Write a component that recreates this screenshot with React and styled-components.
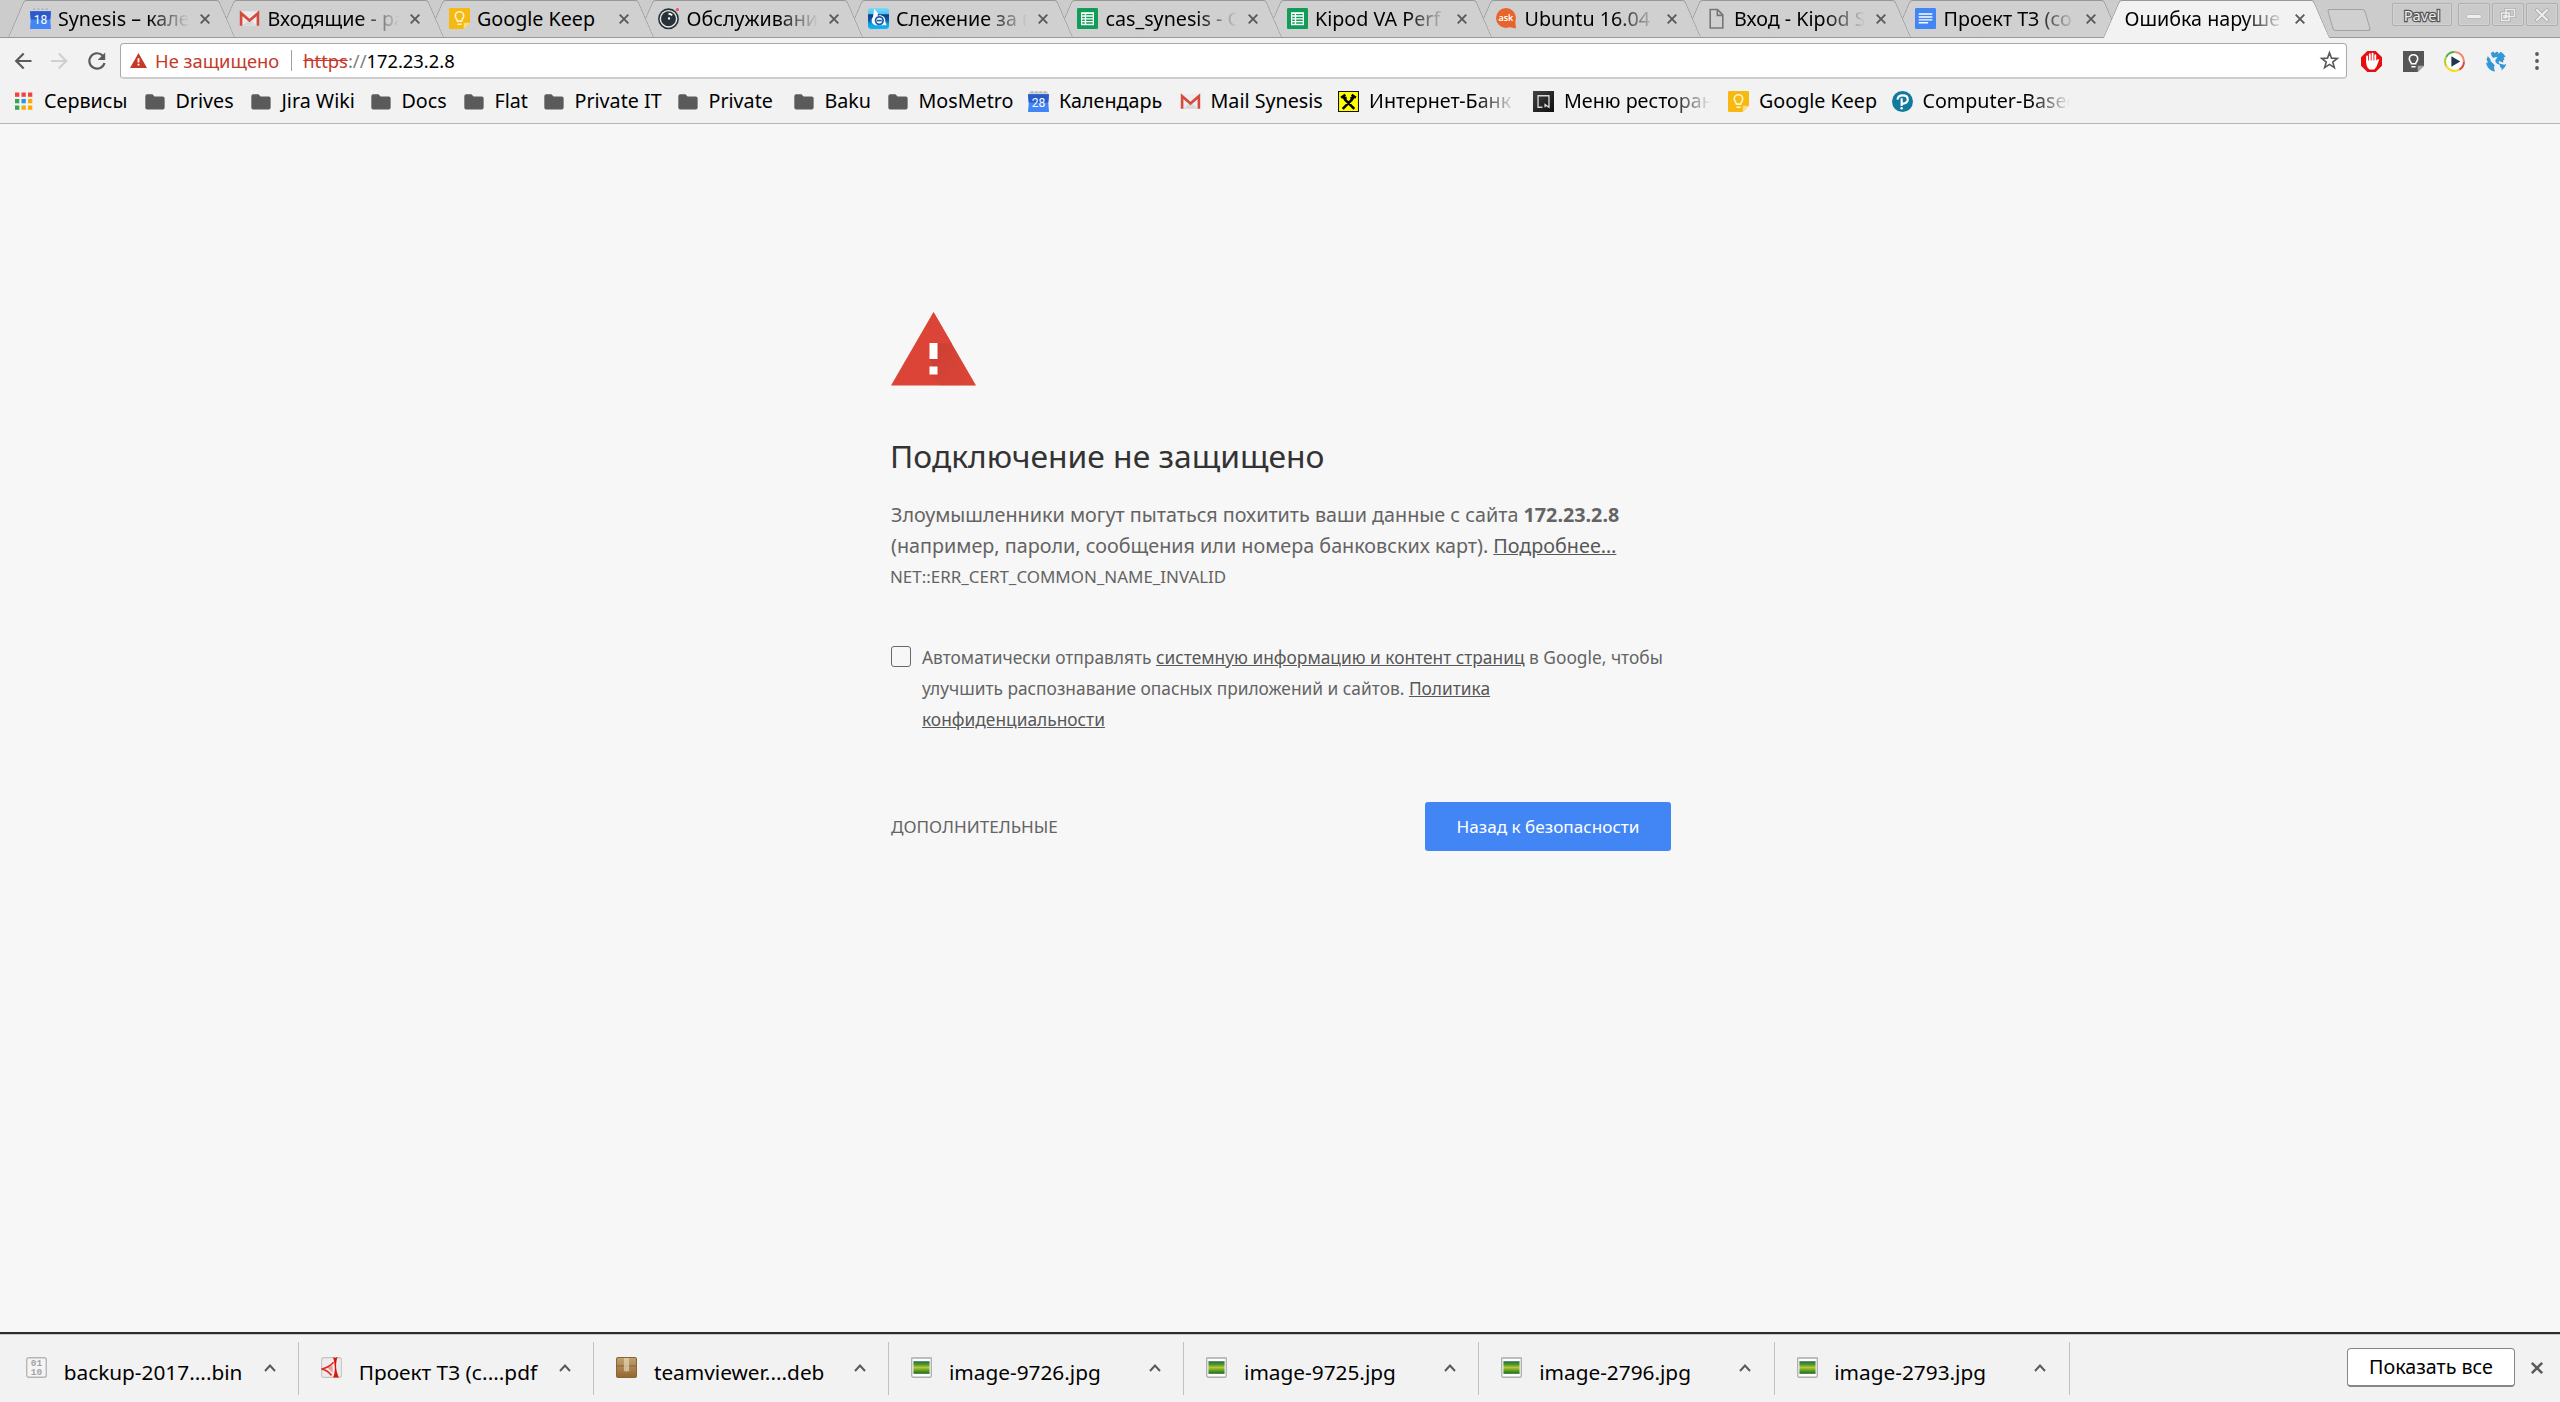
import React from "react";
import styled, { createGlobalStyle, css } from "styled-components";

const GlobalStyle = createGlobalStyle`
  * {
    box-sizing: border-box;
  }
  body {
    margin: 0;
    background: #f7f7f7;
    font-family: "Noto Sans", sans-serif;
    color: #000;
  }
`;

const Window = styled.div`
  width: 2560px;
  height: 1402px;
  display: flex;
  flex-direction: column;
  overflow: hidden;
`;

/* ---------- tab strip ---------- */

const TabStrip = styled.div`
  display: flex;
  height: 38px;
  padding-left: 8px;
  background: #cccccc;
  box-shadow: inset 0 -1px 0 #989898;
`;

const edge = css`
  content: "";
  position: absolute;
  top: 0;
  bottom: 0;
  width: 60%;
  z-index: -1;
  background: ${(props) => (props.$active ? "#f2f2f2" : "#d0d0d0")};
  border-top: 1px solid #979797;
`;

const Tab = styled.div`
  position: relative;
  isolation: isolate;
  z-index: ${(props) => props.$layer};
  display: flex;
  align-items: center;
  flex: none;
  width: 226.5px;
  height: ${(props) => (props.$active ? "38px" : "37px")};
  margin-right: -17px;
  padding-left: 21.5px;
  &::before {
    ${edge}
    left: 0;
    border-left: 1.6px solid #989898;
    border-top-left-radius: 3px;
    transform: skewX(-23.4deg);
    transform-origin: bottom left;
  }
  &::after {
    ${edge}
    right: 0;
    border-right: 1.6px solid #989898;
    border-top-right-radius: 3px;
    transform: skewX(23.4deg);
    transform-origin: bottom right;
  }
`;

const fade = css`
  overflow: hidden;
  white-space: nowrap;
  mask-image: linear-gradient(to right, #000 calc(100% - 40px), transparent);
`;

const TabTitle = styled.span`
  ${(props) => !props.$plain && fade}
  white-space: nowrap;
  flex: none;
  width: ${(props) => (props.$active ? "159px" : "131px")};
  margin-left: ${(props) => (props.$active ? "0" : "7.5px")};
  margin-right: 11.3px;
  font-size: 19.7px;
  line-height: 36px;
`;

const NewTab = styled.div`
  width: 38px;
  height: 22px;
  margin: 9px 0 0 17.5px;
  border: 1.5px solid #a3a3a3;
  border-radius: 3px;
  background: #d0d0d0;
  transform: skewX(16deg);
`;

const WindowButtons = styled.div`
  display: flex;
  gap: 2px;
  margin: 3px 2px 0 auto;
`;

const WindowButton = styled.div`
  display: flex;
  align-items: center;
  justify-content: center;
  width: ${(props) => (props.$wide ? "60px" : "32px")};
  margin-right: ${(props) => (props.$wide ? "4px" : "0")};
  height: 23px;
  border: 1.5px solid #b0b0b0;
  border-radius: 2px;
  background: #cacaca;
  box-shadow: inset 0 0 0 1px #d2d2d2;
  color: #ededed;
  font-size: 14.6px;
  line-height: 20px;
  -webkit-text-stroke: 2.4px #555;
  paint-order: stroke fill;
`;

/* ---------- toolbar ---------- */

const Toolbar = styled.div`
  display: flex;
  align-items: center;
  height: 46px;
  padding: 0 13px;
  background: #f2f2f2;
`;

const NavButton = styled.span`
  display: flex;
  width: 20px;
  margin-right: ${(props) => props.$gap}px;
`;

const Omnibox = styled.div`
  display: flex;
  align-items: center;
  width: 2228px;
  height: 36px;
  padding: 0 7px 0 9px;
  margin-right: 14px;
  background: #fff;
  border: 1px solid #a9a9a9;
  border-bottom: 2px solid #cdcdcd;
  border-radius: 4px;
  font-size: 18.35px;
  line-height: 32px;
`;

const Warning = styled.span`
  display: flex;
  align-items: center;
  gap: 8px;
  height: 21px;
  padding-right: 12px;
  margin-right: 11px;
  border-right: 1px solid #a0a0a0;
  color: #c53929;
`;

const Scheme = styled.span`
  color: #c53929;
  text-decoration: line-through;
`;

const Slashes = styled.span`
  color: #7f7f7f;
`;

const StarSlot = styled.span`
  display: flex;
  margin-left: auto;
`;

const Extensions = styled.div`
  display: flex;
  align-items: center;
  gap: 20.5px;
`;

/* ---------- bookmarks ---------- */

const Bookmarks = styled.div`
  display: flex;
  align-items: center;
  height: 40px;
  padding: 0 0 5px 14px;
  background: #f2f2f2;
  border-bottom: 1.5px solid #b6b6b6;
`;

const Bookmark = styled.div`
  display: flex;
  align-items: center;
  flex: none;
  gap: 10px;
  width: ${(props) => props.$width}px;
  font-size: 19.7px;
  line-height: 32px;
`;

const BookmarkLabel = styled.span`
  white-space: nowrap;
  ${(props) => props.$clipped && fade}
  width: ${(props) => (props.$clipped ? "147px" : "auto")};
  flex: none;
`;

/* ---------- page ---------- */

const Page = styled.main`
  flex: 1;
  padding-top: 188px;
  background: #f7f7f7;
  color: #646464;
`;

const Interstitial = styled.div`
  display: flex;
  flex-direction: column;
  width: 780px;
  margin-left: 891px;
`;

const Heading = styled.h1`
  margin: 48px 0 21px -1px;
  font-size: 31.8px;
  font-weight: 400;
  line-height: 44px;
  color: #333;
`;

const Message = styled.p`
  margin: 0;
  font-size: 19.76px;
  line-height: 31px;
  white-space: nowrap;
`;

const ErrorCode = styled.div`
  margin-left: -1px;
  font-size: 16.95px;
  line-height: 31px;
`;

const Link = styled.a`
  color: #585858;
  text-decoration: underline;
`;

const OptIn = styled.label`
  display: flex;
  gap: 11px;
  margin-top: 50px;
  font-size: 17.33px;
  line-height: 31.2px;
  white-space: nowrap;
`;

const Checkbox = styled.span`
  flex: none;
  width: 20px;
  height: 21px;
  margin-top: 4px;
  border: 1.5px solid #696969;
  border-radius: 3px;
`;

const Actions = styled.div`
  display: flex;
  align-items: center;
  justify-content: space-between;
  margin-top: 66px;
  font-size: 17.15px;
`;

const PrimaryButton = styled.button`
  width: 246px;
  height: 49px;
  padding: 0;
  border: none;
  border-radius: 3px;
  background: #4285f4;
  color: #fff;
  font: inherit;
`;

/* ---------- download shelf ---------- */

const Shelf = styled.footer`
  display: flex;
  height: 70px;
  padding-left: 4px;
  border-top: 2px solid #2d2d2d;
  background: #f2f2f2;
  box-shadow: inset 0 1px 0 #c8c8c8;
`;

const Download = styled.div`
  display: flex;
  width: 295.1px;
  height: 53px;
  margin-top: 8px;
  padding: 15px 22.5px 0 22px;
  border-right: 1.5px solid #c2c2c2;
`;

const FileName = styled.span`
  flex: 1;
  margin: 1px 0 0 16.7px;
  font-size: 20.8px;
  line-height: 28px;
  white-space: nowrap;
`;

const CaretSlot = styled.span`
  display: flex;
  padding-top: 6.5px;
`;

const ShelfEnd = styled.div`
  display: flex;
  align-items: flex-start;
  margin: 14px 17px 0 auto;
`;

const ShowAll = styled.button`
  width: 168px;
  height: 39px;
  padding: 0 0 1px;
  margin-right: 16px;
  border: 1px solid #868686;
  border-bottom-width: 2px;
  border-radius: 4px;
  background: #fff;
  font: 19.7px "Noto Sans", sans-serif;
  color: #000;
`;

const CloseSlot = styled.span`
  display: flex;
  margin-top: 14px;
`;

/* ---------- icons ---------- */

const Svg = styled.svg`
  display: block;
  flex: none;
  overflow: visible;
`;

const Icon = ({ size = 21, w, h, box = "0 0 20 20", children }) => (
  <Svg width={w || size} height={h || size} viewBox={box} fill="none">
    {children}
  </Svg>
);

const CloseIcon = ({ size = 10, width = 1.9 }) => (
  <Icon size={size} box="0 0 10 10">
    <path d="M.7 .7L9.3 9.3M9.3 .7L.7 9.3" stroke="#5a5a5a" strokeWidth={width} />
  </Icon>
);

const CalendarIcon = ({ day }) => (
  <Icon>
    <path d="M1 .5h18v4H1z" fill="#d3d3d3" />
    <path d="M3 1h2M7 1h2M11 1h2M15 1h2" stroke="#a5a5a5" strokeWidth="1.2" />
    <path d="M0 3h20l-.7 8L20 20H0l.7-8.500z" fill="#4285f4" />
    <path d="M0 3h20l-.7 8H.7z" fill="#2a5bcb" />
    <text x="10" y="15.500" textAnchor="middle" fontFamily="Roboto, sans-serif" fontSize="11.500" fill="#fff">
      {day}
    </text>
  </Icon>
);

const MailIcon = () => (
  <Icon>
    <rect x="1" y="3" width="18" height="14" rx="1" fill="#ececec" />
    <path d="M3 17l7-6 7 6z" fill="#d8d8d8" />
    <path d="M2 17V5l8 7 8-7v12" stroke="#d54b3d" strokeWidth="2.500" />
  </Icon>
);

const KeepIcon = () => (
  <Icon>
    <path d="M1 0h18a1 1 0 0 1 1 1v13l-6 6H1a1 1 0 0 1-1-1V1a1 1 0 0 1 1-1z" fill="#f5b912" />
    <path d="M14 20v-5a1 1 0 0 1 1-1h5z" fill="#ffdf78" />
    <path d="M8 12.500c0-1.800-2-2.500-2-5a4 4 0 0 1 8 0c0 2.500-2 3.200-2 5zM8 15.500h4" stroke="#fff3cc" strokeWidth="1.500" />
  </Icon>
);

const EyeIcon = () => (
  <Icon>
    <circle cx="10" cy="10.300" r="9.200" fill="#e6ebec" stroke="#263238" strokeWidth="1.500" />
    <circle cx="10" cy="10.300" r="7.100" fill="#263238" />
    <path d="M10 5.500a5 5 0 0 1 3.500 1.500" stroke="#fff" strokeWidth="1.800" />
    <circle cx="10.500" cy="10" r="1.100" fill="#fff" />
    <circle cx="18.500" cy="1.500" r="1.500" fill="#ff4081" />
  </Icon>
);

const BirdIcon = () => (
  <Icon>
    <defs>
      <linearGradient id="sky" x1="0" y1="0" x2="0" y2="1">
        <stop offset="0" stopColor="#7ed8fa" />
        <stop offset=".28" stopColor="#4cc4f2" />
        <stop offset=".32" stopColor="#0b3f86" />
        <stop offset=".6" stopColor="#0c5cae" />
        <stop offset=".75" stopColor="#0aa0e8" />
        <stop offset="1" stopColor="#16b4f4" />
      </linearGradient>
    </defs>
    <rect width="20" height="20" rx="3" fill="url(#sky)" />
    <path d="M6 .8L9.500 5l-.3 2.500C12 6 17 8 16.500 13l1.200 3.500H8C5 16.500 3 14 3.500 11L4.800 8z" fill="#fff" />
    <circle cx="10.800" cy="12" r="3.600" fill="#fff" stroke="#1b5fa8" strokeWidth="1.700" />
    <path d="M8.500 12h4.600" stroke="#1b5fa8" strokeWidth="1.600" />
  </Icon>
);

const SheetIcon = () => (
  <Icon>
    <rect width="20" height="20" rx="1.300" fill="#0f9d58" />
    <path d="M3.800 4h12.400v12.400H3.800z" fill="#fff" />
    <path d="M5 6.300h2.400M8.700 6.300H15M5 9h2.400M8.700 9H15M5 11.700h2.400M8.700 11.700H15M5 14.300h2.400M8.700 14.300H15" stroke="#0f9d58" strokeWidth="1.400" />
  </Icon>
);

const AskIcon = () => (
  <Icon>
    <circle cx="9.500" cy="9.500" r="9.500" fill="#e9642a" />
    <path d="M12 18l7 1.500-.8-8z" fill="#e9642a" />
    <text x="9.400" y="12.400" textAnchor="middle" fontFamily="Noto Sans, sans-serif" fontWeight="600" fontSize="8.500" fill="#fff">
      ask
    </text>
  </Icon>
);

const PageIcon = () => (
  <Icon>
    <path d="M4 1.500h7l5 5V19H4zM10.800 1.700V7H16" stroke="#757575" strokeWidth="1.500" />
  </Icon>
);

const DocIcon = () => (
  <Icon>
    <rect width="20" height="20" rx="1.300" fill="#4285f4" />
    <path d="M3.500 5.700h13M3.500 8.500h13M3.500 11.300h13M3.500 14.100h9" stroke="#fff" strokeWidth="1.400" />
  </Icon>
);

const AppsIcon = () => {
  const colors = ["#f4433c", "#f4433c", "#f4433c", "#31a853", "#2196f3", "#f9ab00", "#31a853", "#f9ab00", "#f9ab00"];
  return (
    <Icon size={20}>
      {colors.map((c, i) => (
        <rect key={i} x={1 + (i % 3) * 6.5} y={1.5 + Math.floor(i / 3) * 6.5} width="4.300" height="4.300" fill={c} />
      ))}
    </Icon>
  );
};

const FolderIcon = () => (
  <Icon>
    <path d="M.3 5a1.800 1.800 0 0 1 1.800-1.800h5l2 2h7.800A1.800 1.800 0 0 1 18.700 7v8.800a1.800 1.800 0 0 1-1.800 1.800H2.100A1.800 1.800 0 0 1 .3 15.800z" fill="#5a5a5a" />
  </Icon>
);

const BankIcon = () => (
  <Icon>
    <path d="M.5.5h19v19H.5z" fill="#ff0" stroke="#111" />
    <path d="M4.500 17L13 8.500l2.500-4M15.500 17L7 8.500l-2.500-4M3 6.500l4-3M17 6.500l-4-3M7 5.500v4M13 5.500v4" stroke="#000" strokeWidth="2.400" />
  </Icon>
);

const MenuIcon = () => (
  <Icon>
    <defs>
      <linearGradient id="dark" x1="0" y1="0" x2="1" y2="1">
        <stop stopColor="#444" />
        <stop offset="1" stopColor="#0c0c0c" />
      </linearGradient>
    </defs>
    <path d="M0 0h20v20H0z" fill="url(#dark)" />
    <path d="M9 15.500H4.800V4.500h10.400v11l-3.700-2.500v2.500" stroke="#d8d8d8" strokeWidth="1.300" />
  </Icon>
);

const PearsonIcon = () => (
  <Icon>
    <circle cx="10" cy="10" r="10" fill="#127a9c" />
    <path d="M5.200 8.200C5.500 5.500 8 4.200 10.300 4.200c2.800 0 4.700 1.500 4.700 3.900 0 2.600-2.300 4.200-5 3.900M9.200 6.800v7.500" stroke="#fff" strokeWidth="2" />
    <circle cx="9.200" cy="16.400" r="1.200" fill="#fff" />
  </Icon>
);

const BlockIcon = () => (
  <Icon>
    <path d="M6 0h8l6 6v8l-6 6H6l-6-6V6z" fill="#e60f0f" />
    <path d="M5.800 10.500V5.200M8.400 9V3M11 9V2.500M13.600 10V4" stroke="#fff" strokeWidth="1.800" strokeLinecap="round" />
    <path d="M4.900 9h9.600l1.800-1.500 1 .8-2.600 6.700-2 2.500H8.200C5.500 16 4.900 13 4.900 9z" fill="#fff" />
  </Icon>
);

const KeepDarkIcon = () => (
  <Icon>
    <path d="M0 0h20v14l-6 6H0z" fill="#555" />
    <path d="M14 20v-6h6z" fill="#a3a3a3" />
    <path d="M8 12.200c0-1.800-2-2.400-2-4.700a4 4 0 0 1 8 0c0 2.300-2 2.900-2 4.700zM8 15h4" stroke="#fff" strokeWidth="1.500" />
  </Icon>
);

const PlayIcon = () => (
  <Icon>
    <circle cx="10" cy="10" r="8" fill="#fff" />
    <g strokeWidth="2">
      <path d="M10 1a9 9 0 0 1 9 9" stroke="#f08a68" />
      <path d="M19 10a9 9 0 0 1-4.500 7.800" stroke="#e64545" />
      <path d="M14.500 17.800A9 9 0 0 1 2.200 14.500" stroke="#f6dd1e" />
      <path d="M2.200 14.500A9 9 0 0 1 2.200 5.500" stroke="#b8cc30" />
      <path d="M2.200 5.500A9 9 0 0 1 10 1" stroke="#4fb04a" />
    </g>
    <path d="M7 5l8.500 5L7 15z" fill="#26344e" />
  </Icon>
);

const GlobeIcon = () => (
  <Icon>
    <path
      d="M4.500 2L7 .5l1.200 1.700L10 .8l1.800.2-.4 1.600L13 2l.6-1.400c2 .8 4 2.800 5 4.900l-1.800.8.8 1.600-1.400 1.300.4 1.800-2.200-.5-1.500-1-1 1 .8 1.500 2.800.5L17.500 13l1.800-.8c-.6 2.500-2.300 4.900-4.600 6.300l.3-2-1.600-1.300-.3-2.200-2.600-.8-1.700-2.200.6-2.400 1.800-1.300-1.700-.6-2.600 1L5.500 5z"
      fill="#3397d8"
    />
    <path d="M1.800 5l2.400 2.800L4.600 10l2 1.600 1.700 2-.7 2.200.9 3.800C4 19 .5 15.500.1 11l1.400.6L1.200 9 .4 8z" fill="#3397d8" />
  </Icon>
);

const BackIcon = ({ color, flip }) => (
  <Icon size={20}>
    <path d={flip ? "M2 10h15M9.800 2.500L17.300 10l-7.500 7.500" : "M18.500 10h-15M10.700 2.500L3.200 10l7.500 7.500"} stroke={color} strokeWidth="2.200" />
  </Icon>
);

const ReloadIcon = () => (
  <Icon size={20}>
    <path d="M15.800 4.800A7.700 7.700 0 1 0 17.500 12" stroke="#5a5a5a" strokeWidth="2.200" />
    <path d="M18.200 1.500v7.500h-7.500z" fill="#5a5a5a" />
  </Icon>
);

const AlertIcon = () => (
  <Icon w={17} h={15} box="0 0 17 15">
    <path d="M8.500 0L17 15H0z" fill="#c53929" />
    <path d="M7.600 5.200h1.800v4.200H7.600zM7.600 10.800h1.800v1.800H7.600z" fill="#fff" />
  </Icon>
);

const StarIcon = () => (
  <Icon size={19}>
    <path d="M10 1.800l2.100 5.700 6.100.3-4.800 3.800 1.700 5.900-5.100-3.400-5.100 3.400 1.700-5.900L1.800 7.800l6.100-.3z" stroke="#5a5a5a" strokeWidth="1.700" />
  </Icon>
);

const DotsIcon = () => (
  <Icon size={20}>
    <circle cx="10" cy="3" r="1.900" fill="#5a5a5a" />
    <circle cx="10" cy="10" r="1.900" fill="#5a5a5a" />
    <circle cx="10" cy="17" r="1.900" fill="#5a5a5a" />
  </Icon>
);

const DangerIcon = () => (
  <Icon w={85} h={74} box="0 0 85 74">
    <defs>
      <linearGradient id="shade" x1="0" y1="0" x2="1" y2="0.600">
        <stop stopColor="#b93a2f" />
        <stop offset="1" stopColor="#db4437" stopOpacity="0.400" />
      </linearGradient>
    </defs>
    <path d="M42.500 0L85 73.500H0z" fill="#db4437" />
    <path d="M46.500 31L60 31 84.700 73.500H49L38.500 62.500h8L38.500 47h8z" fill="url(#shade)" opacity=".6" />
    <path d="M46.500 31L61 32 42.500 0z" fill="#db4437" />
    <path d="M38.500 31H46.500V47H38.500zM38.500 54.500H46.500V62.500H38.500z" fill="#fff" />
  </Icon>
);

const BinIcon = () => (
  <Icon>
    <rect x=".7" y=".7" width="18.600" height="18.600" rx="2" fill="#f5f5f5" stroke="#b5b5b5" strokeWidth="1.300" />
    <g fontFamily="Liberation Mono, monospace" fontSize="9" fontWeight="700" fill="#a3a3a3" textAnchor="middle">
      <text x="10" y="8.700">01</text>
      <text x="10" y="17">10</text>
    </g>
  </Icon>
);

const PdfIcon = () => (
  <Icon>
    <rect x=".6" y=".6" width="18.800" height="18.800" rx="2" fill="#ececec" stroke="#c4c4c4" />
    <path d="M11.500 0l2 1 2.500-1c-2.500 5-2 13 1 19.500h-5.500c2.500-5 2-12 0-19.500z" fill="#d8140c" />
    <path d="M.5 11.500C5 10.500 9 8.500 12 5M.5 11.500c3 .5 7 3 9.500 6" stroke="#e0281e" strokeWidth="1.500" />
    <path d="M6 10l5-2v7z" fill="#d8140c" opacity=".35" />
  </Icon>
);

const DebIcon = () => (
  <Icon>
    <defs>
      <linearGradient id="box" x1="0" y1="0" x2="0" y2="1">
        <stop stopColor="#c3a272" />
        <stop offset="1" stopColor="#94652f" />
      </linearGradient>
    </defs>
    <rect x=".5" y=".5" width="19" height="19" rx="1.500" fill="url(#box)" stroke="#8b6436" />
    <path d="M1 8.500h18" stroke="#8b6436" />
    <path d="M7.500 1h5v13l-1.200-1-1.300 1.300L8.700 13l-1.200 1z" fill="#e6d6ba" opacity=".7" />
  </Icon>
);

const ImageIcon = () => (
  <Icon>
    <defs>
      <linearGradient id="grass" x1="0" y1="0" x2="0" y2="1">
        <stop stopColor="#276b5c" />
        <stop offset=".25" stopColor="#4c9422" />
        <stop offset=".5" stopColor="#b7c43c" />
        <stop offset=".75" stopColor="#57a01c" />
        <stop offset="1" stopColor="#1f6420" />
      </linearGradient>
    </defs>
    <rect x=".7" y=".7" width="18.600" height="18.600" rx="1.500" fill="#fff" stroke="#aeaeae" strokeWidth="1.300" />
    <path d="M0 1h20" stroke="#bdbdbd" strokeWidth="1.800" />
    <path d="M2.300 4h15.400v12H2.300z" fill="url(#grass)" />
  </Icon>
);

const CaretIcon = () => (
  <Icon w={12} h={8} box="0 0 12 8">
    <path d="M1 7l5-5.500L11 7" stroke="#5a5a5a" strokeWidth="2" />
  </Icon>
);

/* ---------- data ---------- */

const tabs = [
  { icon: <CalendarIcon day="18" />, title: "Synesis – кален" },
  { icon: <MailIcon />, title: "Входящие - pav" },
  { icon: <KeepIcon />, title: "Google Keep", plain: true },
  { icon: <EyeIcon />, title: "Обслуживани" },
  { icon: <BirdIcon />, title: "Слежение за п" },
  { icon: <SheetIcon />, title: "cas_synesis - G" },
  { icon: <SheetIcon />, title: "Kipod VA Perf" },
  { icon: <AskIcon />, title: "Ubuntu 16.04 -" },
  { icon: <PageIcon />, title: "Вход - Kipod S" },
  { icon: <DocIcon />, title: "Проект ТЗ (со" },
  { title: "Ошибка наруше", active: true },
];

const bookmarks = [
  { icon: <AppsIcon />, label: "Сервисы", width: 130.5 },
  { icon: <FolderIcon />, label: "Drives", width: 106 },
  { icon: <FolderIcon />, label: "Jira Wiki", width: 120 },
  { icon: <FolderIcon />, label: "Docs", width: 93 },
  { icon: <FolderIcon />, label: "Flat", width: 80 },
  { icon: <FolderIcon />, label: "Private IT", width: 134 },
  { icon: <FolderIcon />, label: "Private", width: 116 },
  { icon: <FolderIcon />, label: "Baku", width: 94 },
  { icon: <FolderIcon />, label: "MosMetro", width: 140.5 },
  { icon: <CalendarIcon day="28" />, label: "Календарь", width: 151.5 },
  { icon: <MailIcon />, label: "Mail Synesis", width: 158.5 },
  { icon: <BankIcon />, label: "Интернет-Банк", width: 195, clipped: true },
  { icon: <MenuIcon />, label: "Меню ресторан", width: 195, clipped: true },
  { icon: <KeepIcon />, label: "Google Keep", width: 163.5 },
  { icon: <PearsonIcon />, label: "Computer-Based", width: 190, clipped: true },
];

const downloads = [
  { icon: <BinIcon />, name: "backup-2017....bin" },
  { icon: <PdfIcon />, name: "Проект ТЗ (с....pdf" },
  { icon: <DebIcon />, name: "teamviewer....deb" },
  { icon: <ImageIcon />, name: "image-9726.jpg" },
  { icon: <ImageIcon />, name: "image-9725.jpg" },
  { icon: <ImageIcon />, name: "image-2796.jpg" },
  { icon: <ImageIcon />, name: "image-2793.jpg" },
];

const Tabs = () => (
  <TabStrip>
    {tabs.map((tab, i) => (
      <Tab key={i} $active={tab.active} $layer={tab.active ? 20 : 12 - i}>
        {tab.icon}
        <TabTitle $active={tab.active} $plain={tab.plain}>
          {tab.title}
        </TabTitle>
        <CloseIcon />
      </Tab>
    ))}
    <NewTab />
    <WindowButtons>
      <WindowButton $wide>Pavel</WindowButton>
      <WindowButton>
        <Icon w={16} h={16} box="0 0 16 16">
          <rect x="1" y="8" width="14" height="3" rx="1" fill="#eee" stroke="#aaa" strokeWidth=".8" />
        </Icon>
      </WindowButton>
      <WindowButton>
        <Icon w={16} h={16} box="0 0 16 16">
          <path d="M6 2.500h8.500v7H6zM1.500 6H9v7.500H1.500zM4 8.800h2.500v2H4z" stroke="#a9a9a9" strokeWidth="3" />
          <path d="M6 2.500h8.500v7H6zM1.500 6H9v7.500H1.500zM4 8.800h2.500v2H4z" stroke="#ededed" strokeWidth="1.500" />
        </Icon>
      </WindowButton>
      <WindowButton>
        <Icon w={16} h={16} box="0 0 16 16">
          <path d="M3 3l10 10M13 3L3 13" stroke="#a9a9a9" strokeWidth="3.800" strokeLinecap="round" />
          <path d="M3 3l10 10M13 3L3 13" stroke="#eee" strokeWidth="2.200" strokeLinecap="round" />
        </Icon>
      </WindowButton>
    </WindowButtons>
  </TabStrip>
);

const App = () => {
  return (
    <>
      <GlobalStyle />
      <Window>
        <Tabs />
        <Toolbar>
          <NavButton $gap={16}>
            <BackIcon color="#5a5a5a" />
          </NavButton>
          <NavButton $gap={18}>
            <BackIcon color="#d0d0d0" flip />
          </NavButton>
          <NavButton $gap={13}>
            <ReloadIcon />
          </NavButton>
          <Omnibox>
            <Warning>
              <AlertIcon />
              Не защищено
            </Warning>
            <Scheme>https</Scheme>
            <Slashes>://</Slashes>
            172.23.2.8
            <StarSlot>
              <StarIcon />
            </StarSlot>
          </Omnibox>
          <Extensions>
            <BlockIcon />
            <KeepDarkIcon />
            <PlayIcon />
            <GlobeIcon />
            <DotsIcon />
          </Extensions>
        </Toolbar>
        <Bookmarks>
          {bookmarks.map((b, i) => (
            <Bookmark key={i} $width={b.width}>
              {b.icon}
              <BookmarkLabel $clipped={b.clipped}>{b.label}</BookmarkLabel>
            </Bookmark>
          ))}
        </Bookmarks>
        <Page>
          <Interstitial>
            <DangerIcon />
            <Heading>Подключение не защищено</Heading>
            <Message>
              Злоумышленники могут пытаться похитить ваши данные с сайта <b>172.23.2.8</b>
              <br />
              (например, пароли, сообщения или номера банковских карт). <Link>Подробнее…</Link>
            </Message>
            <ErrorCode>NET::ERR_CERT_COMMON_NAME_INVALID</ErrorCode>
            <OptIn>
              <Checkbox />
              <span>
                Автоматически отправлять <Link>системную информацию и контент страниц</Link> в Google, чтобы
                <br />
                улучшить распознавание опасных приложений и сайтов. <Link>Политика</Link>
                <br />
                <Link>конфиденциальности</Link>
              </span>
            </OptIn>
            <Actions>
              <span>ДОПОЛНИТЕЛЬНЫЕ</span>
              <PrimaryButton>Назад к безопасности</PrimaryButton>
            </Actions>
          </Interstitial>
        </Page>
        <Shelf>
          {downloads.map((d) => (
            <Download key={d.name}>
              {d.icon}
              <FileName>{d.name}</FileName>
              <CaretSlot>
                <CaretIcon />
              </CaretSlot>
            </Download>
          ))}
          <ShelfEnd>
            <ShowAll>Показать все</ShowAll>
            <CloseSlot>
              <CloseIcon size={12} width={2.1} />
            </CloseSlot>
          </ShelfEnd>
        </Shelf>
      </Window>
    </>
  );
};

export default App;
